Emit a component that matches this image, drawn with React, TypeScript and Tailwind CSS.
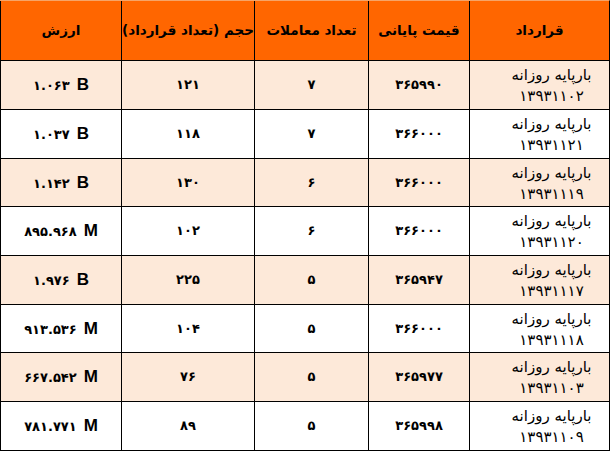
import React from "react";

type Row = {
  contract: string;
  date: string;
  price: string;
  trades: string;
  volume: string;
  value: string;
  unit: "B" | "M";
};

const rows: Row[] = [
  { contract: "بارپایه روزانه", date: "۱۳۹۳۱۱۰۲", price: "۳۶۵۹۹۰", trades: "۷", volume: "۱۲۱", value: "۱.۰۶۳", unit: "B" },
  { contract: "بارپایه روزانه", date: "۱۳۹۳۱۱۲۱", price: "۳۶۶۰۰۰", trades: "۷", volume: "۱۱۸", value: "۱.۰۳۷", unit: "B" },
  { contract: "بارپایه روزانه", date: "۱۳۹۳۱۱۱۹", price: "۳۶۶۰۰۰", trades: "۶", volume: "۱۳۰", value: "۱.۱۴۲", unit: "B" },
  { contract: "بارپایه روزانه", date: "۱۳۹۳۱۱۲۰", price: "۳۶۶۰۰۰", trades: "۶", volume: "۱۰۲", value: "۸۹۵.۹۶۸", unit: "M" },
  { contract: "بارپایه روزانه", date: "۱۳۹۳۱۱۱۷", price: "۳۶۵۹۴۷", trades: "۵", volume: "۲۲۵", value: "۱.۹۷۶", unit: "B" },
  { contract: "بارپایه روزانه", date: "۱۳۹۳۱۱۱۸", price: "۳۶۶۰۰۰", trades: "۵", volume: "۱۰۴", value: "۹۱۳.۵۳۶", unit: "M" },
  { contract: "بارپایه روزانه", date: "۱۳۹۳۱۱۰۳", price: "۳۶۵۹۷۷", trades: "۵", volume: "۷۶", value: "۶۶۷.۵۴۲", unit: "M" },
  { contract: "بارپایه روزانه", date: "۱۳۹۳۱۱۰۹", price: "۳۶۵۹۹۸", trades: "۵", volume: "۸۹", value: "۷۸۱.۷۷۱", unit: "M" },
];

const headers = ["قرارداد", "قیمت پایانی", "تعداد معاملات", "حجم (تعداد قرارداد)", "ارزش"];

const cell = "flex items-center justify-center border-b border-l border-black";

export default function App() {
  return (
    <div className="min-h-[453px] w-[613px] bg-white font-['DejaVu_Sans',sans-serif] text-black">
      <div
        dir="rtl"
        className="grid w-[610px] grid-cols-[140px_101px_114px_133px_121px] grid-rows-[60px_49px_49px_48px_49px_49px_48px_49px_49px] border-t border-r border-t-[#f6a468] border-r-black"
      >
        {headers.map((h) => (
          <div key={h} className={`${cell} whitespace-nowrap bg-[#ff6600] text-[13.5px] font-bold`}>
            {h}
          </div>
        ))}
        {rows.map((r, i) => {
          const bg = i % 2 === 0 ? "bg-[#fde9d9]" : "bg-white";
          return (
            <React.Fragment key={r.date}>
              <div className={`flex flex-col items-center border-b border-l border-black pt-[4px] pl-[24px] text-[15px] leading-[21px] ${bg}`}>
                <span>{r.contract}</span>
                <span>{r.date}</span>
              </div>
              <div className={`${cell} ${bg} text-[13px] font-bold`}>{r.price}</div>
              <div className={`${cell} ${bg} text-[13px] font-bold`}>{r.trades}</div>
              <div className={`${cell} ${bg} text-[13px] font-bold`}>{r.volume}</div>
              <div className={`${cell} ${bg}`}>
                <span dir="ltr" className="flex items-baseline gap-[7px]">
                  <span className="text-[13px] font-bold">{r.value}</span>
                  <span className="font-['Liberation_Sans',sans-serif] text-[17px] font-bold">{r.unit}</span>
                </span>
              </div>
            </React.Fragment>
          );
        })}
      </div>
    </div>
  );
}
